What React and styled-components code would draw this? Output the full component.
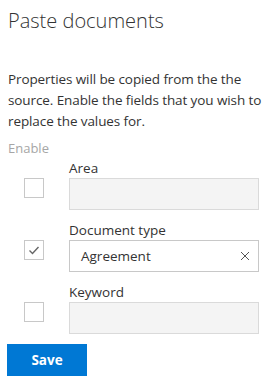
import React from 'react';
import styled, { createGlobalStyle } from 'styled-components';

const GlobalStyle = createGlobalStyle`
  body {
    margin: 0;
    background: #ffffff;
    font-family: "Open Sans", "Noto Sans", sans-serif;
    color: #333333;
  }
`;

const fields = [
  { label: 'Area', enabled: false, value: '' },
  { label: 'Document type', enabled: true, value: 'Agreement' },
  { label: 'Keyword', enabled: false, value: '' },
];

const CheckIcon = () => (
  <svg width="12" height="12" viewBox="0 0 12 12">
    <path d="M1.5 6.5 L4.5 9.5 L10.5 3" fill="none" stroke="#666666" strokeWidth="1.4" />
  </svg>
);

const ClearIcon = () => (
  <svg width="10" height="10" viewBox="0 0 10 10">
    <path d="M1 1 L9 9 M9 1 L1 9" fill="none" stroke="#555555" strokeWidth="1" />
  </svg>
);

const App = () => {
  return (
    <Wrapper>
      <GlobalStyle />
      <Title>Paste documents</Title>
      <Description>
        Properties will be copied from the the<br />
        source. Enable the fields that you wish to<br />
        replace the values for.
      </Description>
      <EnableHeader>Enable</EnableHeader>
      <Fields>
        {fields.map((field) => (
          <FieldRow key={field.label}>
            <CheckCell>
              <Checkbox>{field.enabled && <CheckIcon />}</Checkbox>
            </CheckCell>
            <FieldColumn>
              <Label>{field.label}</Label>
              <Input disabled={!field.enabled}>
                <InputValue>{field.value}</InputValue>
                {field.value && (
                  <ClearButton>
                    <ClearIcon />
                  </ClearButton>
                )}
              </Input>
            </FieldColumn>
          </FieldRow>
        ))}
      </Fields>
      <SaveButton>Save</SaveButton>
    </Wrapper>
  );
};

const Wrapper = styled.div`
  width: 271px;
  height: 387px;
  padding: 8px 8px 0 8px;
  box-sizing: border-box;
`;

const Title = styled.h1`
  margin: 0;
  font-size: 20px;
  font-weight: 300;
  line-height: 26px;
  color: #333333;
`;

const Description = styled.p`
  margin: 35px 0 0 0;
  font-size: 13.5px;
  line-height: 21px;
  white-space: nowrap;
  color: #333333;
  letter-spacing: -0.1px;
`;

const EnableHeader = styled.div`
  margin-top: 6px;
  font-size: 13px;
  line-height: 20px;
  color: #a6a6a6;
`;

const Fields = styled.div`
  display: flex;
  flex-direction: column;
  gap: 10px;
`;

const FieldRow = styled.div`
  display: flex;
  align-items: flex-end;
`;

const CheckCell = styled.div`
  width: 61px;
  height: 32px;
  display: flex;
  align-items: flex-start;
  padding-left: 16px;
  box-sizing: border-box;
`;

const Checkbox = styled.div`
  width: 20px;
  height: 20px;
  box-sizing: border-box;
  border: 1px solid #c8c8c8;
  display: flex;
  align-items: center;
  justify-content: center;
`;

const FieldColumn = styled.div`
  width: 190px;
  display: flex;
  flex-direction: column;
`;

const Label = styled.label`
  font-size: 13.5px;
  line-height: 20px;
  color: #333333;
`;

const Input = styled.div`
  height: 32px;
  box-sizing: border-box;
  display: flex;
  align-items: center;
  border: 1px solid ${(p) => (p.disabled ? '#dadada' : '#c8c8c8')};
  background: ${(p) => (p.disabled ? '#f4f4f4' : '#ffffff')};
  padding: 0 7px 0 11px;
`;

const InputValue = styled.span`
  flex: 1;
  font-size: 13.5px;
  color: #333333;
`;

const ClearButton = styled.span`
  display: flex;
  align-items: center;
  justify-content: center;
  width: 12px;
  height: 12px;
`;

const SaveButton = styled.button`
  margin-top: 10px;
  margin-left: -1px;
  width: 80px;
  height: 32px;
  border: none;
  background: #0078d4;
  color: #ffffff;
  font-family: "Open Sans", "Noto Sans", sans-serif;
  font-size: 13.5px;
  font-weight: 700;
  padding: 0;
`;

export default App;
